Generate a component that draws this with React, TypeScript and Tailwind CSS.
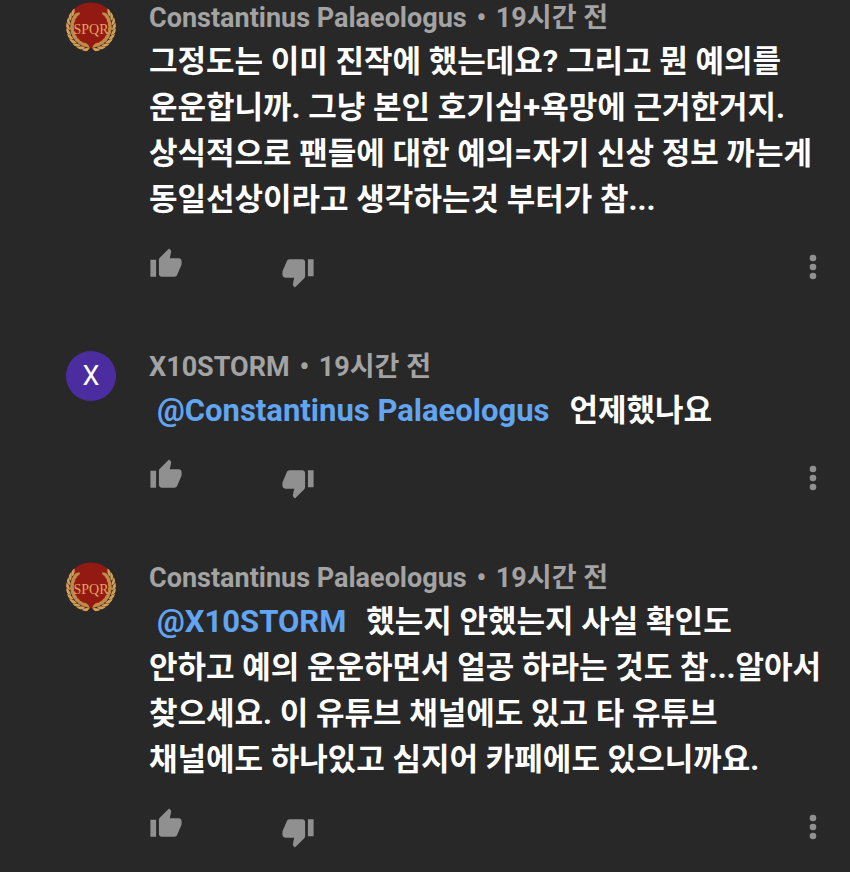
import type { ReactNode } from "react";

interface CommentProps {
  author: string;
  time: string;
  avatar: ReactNode;
  mention?: string;
  text: string;
}

// leaf positions (degrees from the bottom) for one side of the wreath
const LEAVES = [10, 23, 36, 49, 62, 75, 88, 101, 114, 126];

function WreathSide() {
  return (
    <g>
      {LEAVES.map((angle) => (
        <g key={angle} transform={`rotate(${angle} 25 25)`}>
          <path d="M27.500 46.2Q25.500 51.4 19.4 49.8Q22 46 27.500 46.2Z" fill="#cfa05a" />
          <path d="M27.500 45.8Q24 40.4 19.6 42.2Q22 46.8 27.500 45.8Z" fill="#c08a48" />
        </g>
      ))}
    </g>
  );
}

function SpqrAvatar() {
  return (
    <svg viewBox="0 0 50 50" className="size-[50px] rounded-full" role="img" aria-label="SPQR">
      <circle cx="25" cy="25" r="24.5" fill="#921a12" />
      <path d="M25 50A25 25 0 0 1 6 9L9 12A21 21 0 0 0 25 46Z" fill="#35241d" />
      <path d="M25 50A25 25 0 0 0 44 9L41 12A21 21 0 0 1 25 46Z" fill="#35241d" />
      <WreathSide />
      <g transform="translate(50 0) scale(-1 1)">
        <WreathSide />
      </g>
      <text
        x="25"
        y="32"
        textAnchor="middle"
        fontSize="14"
        fontFamily="'Liberation Serif', serif"
        fill="#e0a265"
      >
        SPQR
      </text>
    </svg>
  );
}

function LetterAvatar({ letter }: { letter: string }) {
  return (
    <div className="flex size-[50px] items-center justify-center rounded-full bg-[#4b2da0] text-[27px] text-white">
      {letter}
    </div>
  );
}

function Comment({ author, time, avatar, mention, text }: CommentProps) {
  return (
    <article className="flex gap-[33px]">
      <div className="shrink-0 pt-0.5">{avatar}</div>
      <div className="min-w-0 flex-1">
        <header className="h-[39px] text-[27px] leading-9 font-bold text-[#a3a3a3]">
          {author} <span className="mx-[3px]">•</span> {time}
        </header>
        <p className="text-[31px] leading-[46px] font-bold whitespace-pre-line text-white">
          {mention && (
            <a href="#" className="mr-5 ml-2 text-[#62a5f2]">
              {mention}
            </a>
          )}
          {text}
        </p>
        <div className="flex items-start pt-6 pb-[60px] text-[#909090]">
          <button aria-label="좋아요">
            <svg viewBox="0 0 24 24" className="size-[34px]" fill="currentColor">
              <path d="M1 21h4V9H1v12zm22-11c0-1.100-.9-2-2-2h-6.310l.95-4.570.03-.32c0-.41-.17-.79-.44-1.060L14.170 1 7.590 7.590C7.220 7.950 7 8.450 7 9v10c0 1.100.9 2 2 2h9c.83 0 1.540-.5 1.840-1.220l3.020-7.050c.09-.23.14-.47.14-.73v-2z" />
            </svg>
          </button>
          <button aria-label="싫어요" className="ml-[98px] pt-2">
            <svg viewBox="0 0 24 24" className="size-[34px]" fill="currentColor">
              <path d="M15 3H6c-.83 0-1.540.5-1.840 1.220l-3.020 7.050c-.09.23-.14.47-.14.73v2c0 1.100.9 2 2 2h6.310l-.95 4.570-.03.32c0 .41.17.79.44 1.060L9.830 23l6.590-6.590c.36-.36.58-.86.58-1.410V5c0-1.100-.9-2-2-2zm4 0v12h4V3h-4z" />
            </svg>
          </button>
          <button aria-label="더보기" className="ml-auto pt-0.5">
            <svg viewBox="0 0 24 24" className="size-9" fill="currentColor">
              <circle cx="12" cy="6" r="2.200" />
              <circle cx="12" cy="12" r="2.200" />
              <circle cx="12" cy="18" r="2.200" />
            </svg>
          </button>
        </div>
      </div>
    </article>
  );
}

export default function App() {
  return (
    <main className="min-h-screen overflow-hidden bg-[#282828] pr-[19px] pl-[66px] font-[Roboto,'Noto_Sans_CJK_KR',sans-serif]">
      <Comment
        author="Constantinus Palaeologus"
        time="19시간 전"
        avatar={<SpqrAvatar />}
        text={`그정도는 이미 진작에 했는데요? 그리고 뭔 예의를
운운합니까. 그냥 본인 호기심+욕망에 근거한거지.
상식적으로 팬들에 대한 예의=자기 신상 정보 까는게
동일선상이라고 생각하는것 부터가 참...`}
      />
      <Comment
        author="X10STORM"
        time="19시간 전"
        avatar={<LetterAvatar letter="X" />}
        mention="@Constantinus Palaeologus"
        text="언제했나요"
      />
      <Comment
        author="Constantinus Palaeologus"
        time="19시간 전"
        avatar={<SpqrAvatar />}
        mention="@X10STORM"
        text={`했는지 안했는지 사실 확인도
안하고 예의 운운하면서 얼공 하라는 것도 참...알아서
찾으세요. 이 유튜브 채널에도 있고 타 유튜브
채널에도 하나있고 심지어 카페에도 있으니까요.`}
      />
    </main>
  );
}
